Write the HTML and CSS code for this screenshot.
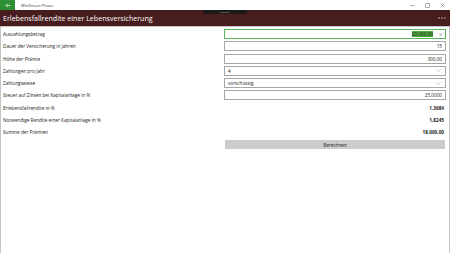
FILE: index.html
```html
<!DOCTYPE html>
<html lang="de">
<head>
    <meta charset="UTF-8">
    <title>WinZinsen Phone</title>
    <link rel="stylesheet" href="styles.css">
</head>
<body>
    <div class="titlebar">
        <div class="back-button">
            <svg width="6" height="5" viewBox="0 0 6 5"><path d="M5.5 2.5H1M2.8 0.7L1 2.5l1.8 1.8" fill="none" stroke="#fff" stroke-width="0.7"/></svg>
        </div>
        <span class="app-title">WinZinsen Phone</span>
        <div class="window-controls">
            <span class="ctl"><svg width="5" height="5" viewBox="0 0 5 5"><path d="M0.5 2.5h4" stroke="#555" stroke-width="0.5"/></svg></span>
            <span class="ctl"><svg width="5" height="5" viewBox="0 0 5 5"><rect x="0.75" y="0.75" width="3.5" height="3.5" fill="none" stroke="#555" stroke-width="0.5"/></svg></span>
            <span class="ctl"><svg width="5" height="5" viewBox="0 0 5 5"><path d="M0.8 0.8l3.4 3.4M4.2 0.8L0.8 4.2" stroke="#555" stroke-width="0.5"/></svg></span>
        </div>
    </div>

    <div class="header">
        <h1>Erlebensfallrendite einer Lebensversicherung</h1>
        <svg class="more" width="8" height="2" viewBox="0 0 8 2">
            <circle cx="1" cy="1" r="0.7" fill="#ddd"/>
            <circle cx="4" cy="1" r="0.7" fill="#ddd"/>
            <circle cx="7" cy="1" r="0.7" fill="#ddd"/>
        </svg>
        <div class="tab-strip"><span></span></div>
    </div>

    <div class="content">
        <div class="form">
            <label>Auszahlungsbetrag</label>
            <div class="field active">
                <span class="value"><span class="selected">20.000,00</span></span>
                <span class="clear">&#x2715;</span>
            </div>

            <label>Dauer der Versicherung in Jahren</label>
            <div class="field"><span class="value">15</span></div>

            <label>Höhe der Prämie</label>
            <div class="field"><span class="value">300,00</span></div>

            <label>Zahlungen pro Jahr</label>
            <div class="field select">
                <span class="option">4</span>
                <svg class="chevron" width="5" height="3" viewBox="0 0 5 3"><path d="M0.5 0.5l2 2 2-2" fill="none" stroke="#888" stroke-width="0.5"/></svg>
            </div>

            <label>Zahlungsweise</label>
            <div class="field select">
                <span class="option">vorschüssig</span>
                <svg class="chevron" width="5" height="3" viewBox="0 0 5 3"><path d="M0.5 0.5l2 2 2-2" fill="none" stroke="#888" stroke-width="0.5"/></svg>
            </div>

            <label>Steuer auf Zinsen bei Kapitalanlage in %</label>
            <div class="field"><span class="value">25,0000</span></div>

            <label>Erlebensfallrendite in %</label>
            <div class="result">1,3684</div>

            <label>Notwendige Rendite einer Kapitalanlage in %</label>
            <div class="result">1,8245</div>

            <label>Summe der Prämien</label>
            <div class="result">18.000,00</div>

            <span></span>
            <button class="calc-button">Berechnen</button>
        </div>
    </div>
</body>
</html>
```

FILE: styles.css
```css
body {
    margin: 0;
    width: 450px;
    height: 253px;
    font-family: "Open Sans", "Noto Sans", Arial, sans-serif;
    background-color: #ffffff;
    color: #222;
    overflow: hidden;
}
.titlebar {
    height: 10px;
    display: flex;
    align-items: center;
    background-color: #ffffff;
}
.back-button {
    width: 15px;
    height: 10px;
    background-color: #2f8f35;
    display: flex;
    align-items: center;
    justify-content: center;
}
.app-title {
    font-size: 4px;
    color: #333;
    margin-left: 6px;
}
.window-controls {
    margin-left: auto;
    display: flex;
    gap: 10px;
    padding-right: 5px;
}
.ctl {
    width: 5px;
    height: 5px;
    display: flex;
}
.header {
    position: relative;
    height: 16px;
    background-color: #481d1d;
    display: flex;
    align-items: center;
    padding: 0 3px;
    border-bottom: 1px solid #c9c4c4;
}
.header h1 {
    margin: 0;
    font-size: 7.1px;
    font-weight: normal;
    color: #ffffff;
}
.more {
    margin-left: auto;
    margin-right: 1px;
}
.tab-strip {
    position: absolute;
    top: 0;
    left: 203px;
    width: 44px;
    height: 4px;
    background-color: #1b1b1b;
    display: flex;
    justify-content: center;
    align-items: center;
}
.tab-strip span {
    width: 10px;
    height: 1px;
    background-color: #555;
}
.content {
    height: 225px;
    border-left: 1px solid #c4c4c4;
    border-right: 1px solid #c4c4c4;
    border-bottom: 1px solid #c4c4c4;
    padding: 2px 3px 0 2px;
}
.form {
    display: grid;
    grid-template-columns: 1fr 222px;
    grid-auto-rows: 10px;
    row-gap: 2.3px;
    align-items: center;
}
.form label {
    font-size: 4.7px;
    color: #222;
}
.field {
    height: 10px;
    box-sizing: border-box;
    border: 1px solid #a6a6a6;
    background-color: #fff;
    display: flex;
    align-items: center;
    padding: 0 3px;
    font-size: 4.7px;
}
.field.active {
    border-color: #5bb65b;
}
.value {
    margin-left: auto;
}
.selected {
    background-color: #4fa83f;
    color: #1a1a1a;
}
.clear {
    font-size: 4px;
    color: #777;
    margin-left: 6px;
}
.select .option {
    flex: 1;
}
.chevron {
    margin-right: 1px;
}
.result {
    text-align: right;
    font-size: 4.7px;
    font-weight: bold;
    padding-right: 2px;
}
.calc-button {
    height: 9px;
    margin: 0 1px;
    border: none;
    background-color: #cccccc;
    font-family: inherit;
    font-size: 4.7px;
    color: #222;
    padding: 0;
}
```
